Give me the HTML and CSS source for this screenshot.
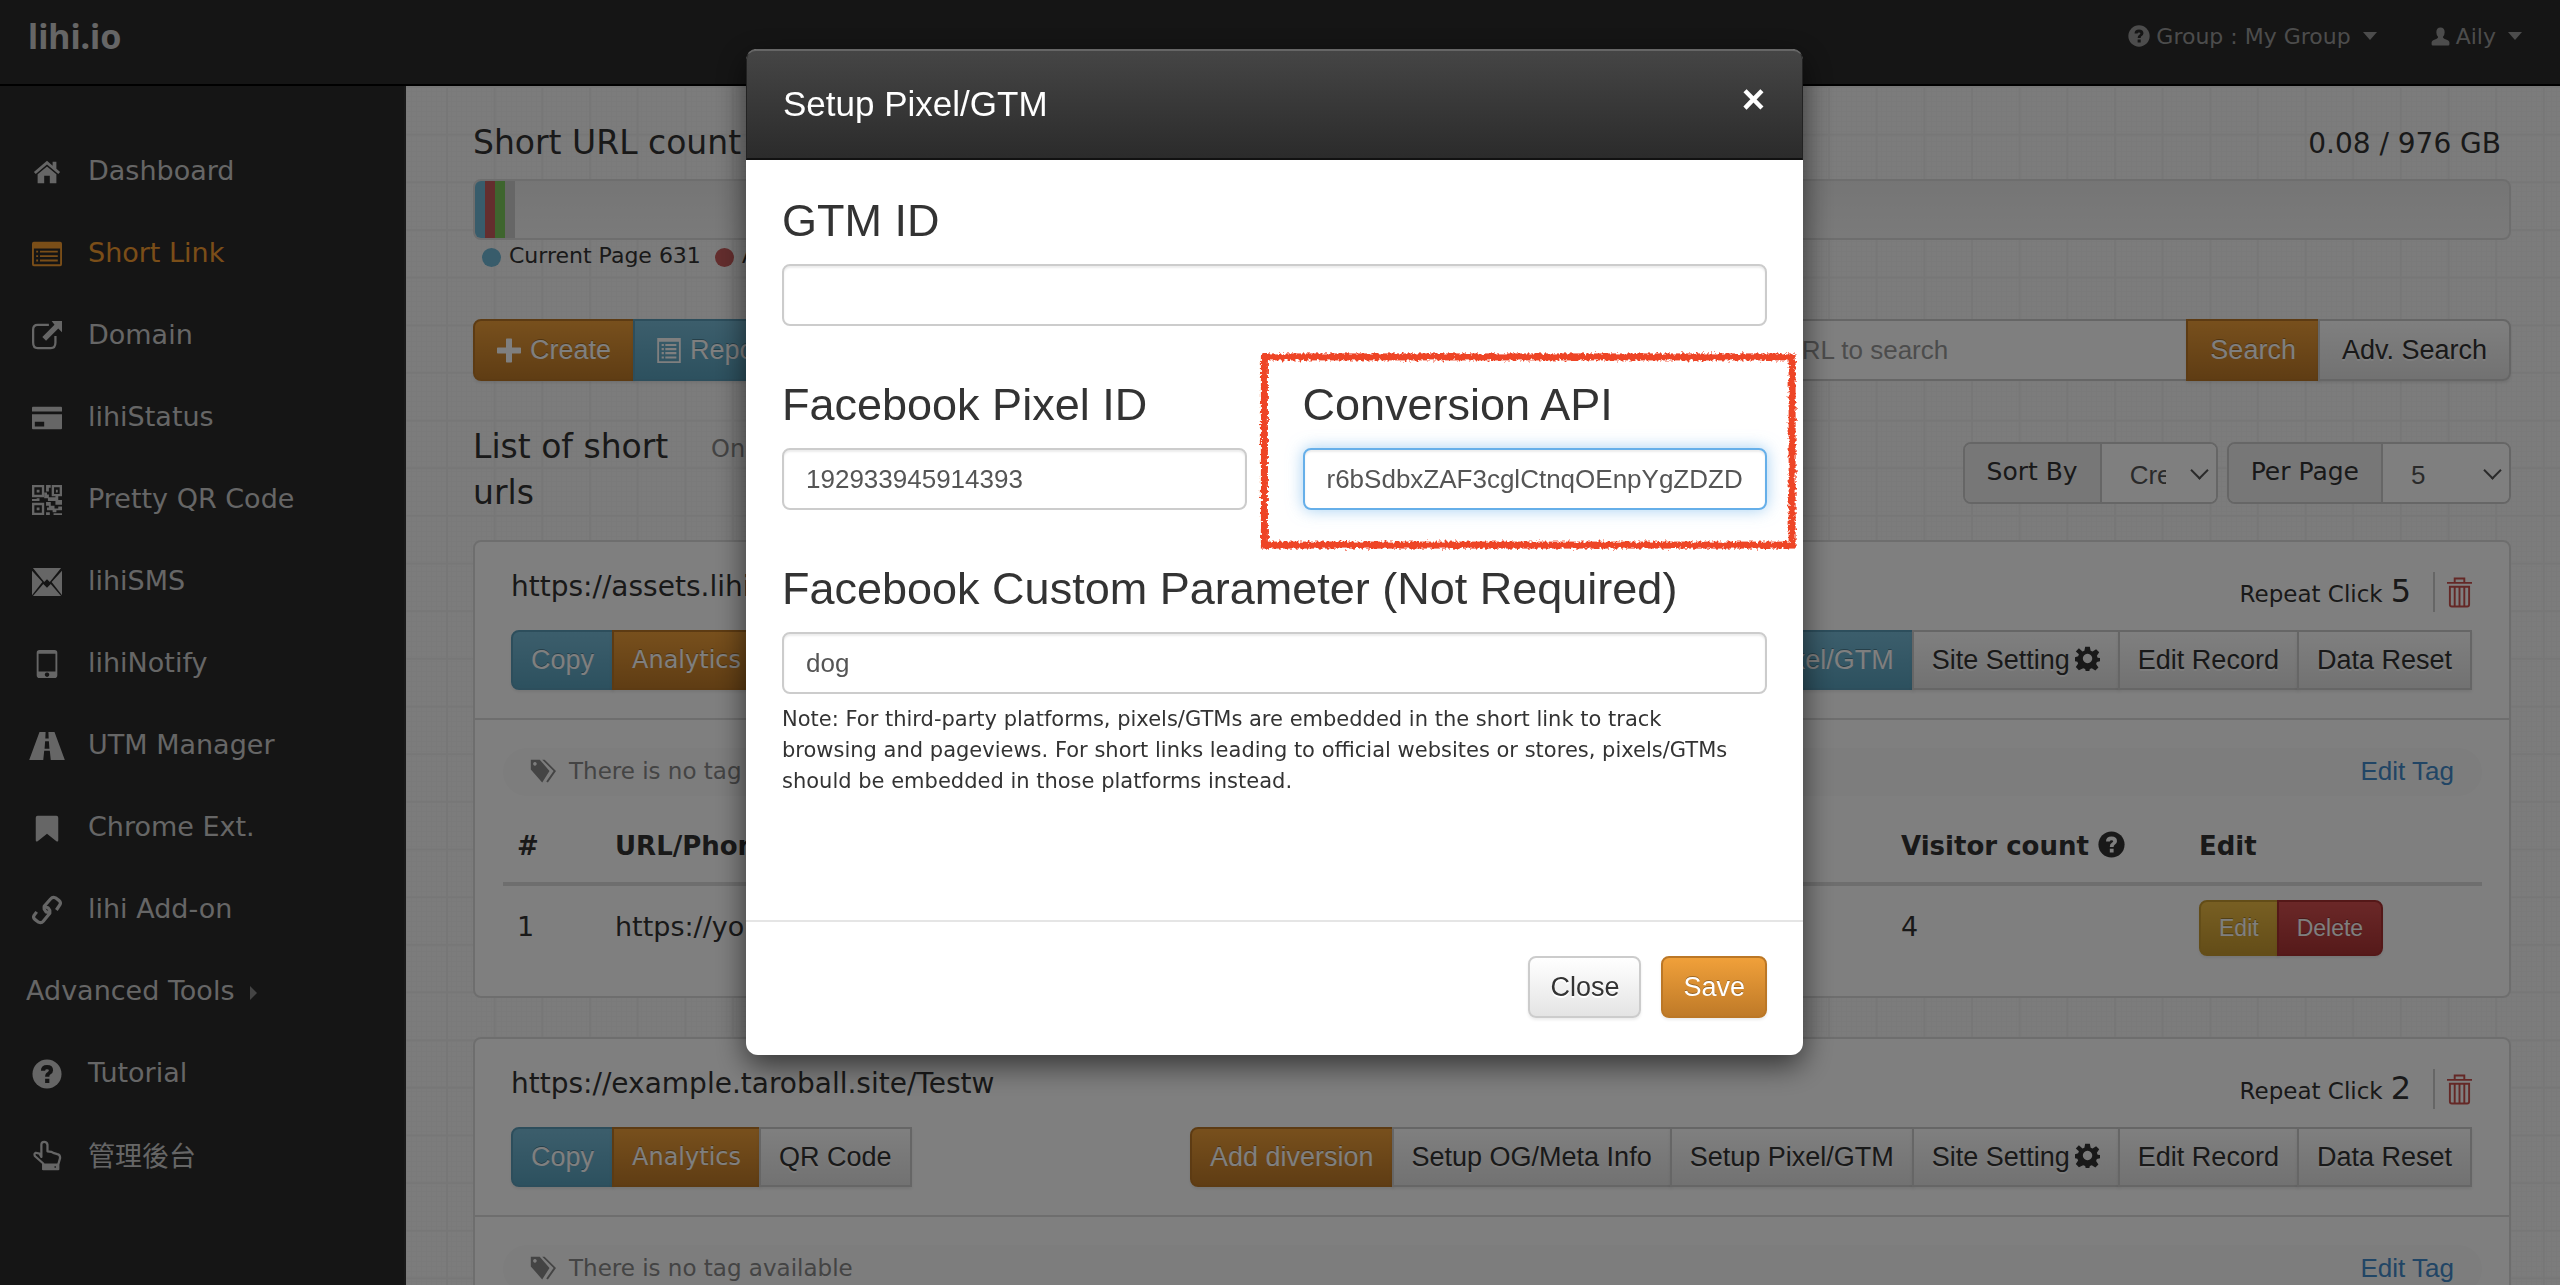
FILE: index.html
```html
<!DOCTYPE html>
<html lang="en">
<head>
    <meta charset="UTF-8">
    <meta name="viewport" content="width=device-width, initial-scale=1.0">
    <title>lihi.io</title>
    <link rel="stylesheet" href="styles.css">
</head>
<body class="modal-open">

    <!-- icons -->
    <svg class="sprite" aria-hidden="true">
        <symbol id="i-home" viewBox="0 0 32 32"><path d="M16 4 2 16l2 2L16 8l12 10 2-2-4-3.400V5h-4v4.200z"/><path d="M16 10 6 18.500V28h7v-8h6v8h7v-9.500z"/></symbol>
        <symbol id="i-list" viewBox="0 0 32 32"><path fill-rule="evenodd" d="M2 3h28q2 0 2 2v22q0 2-2 2H2q-2 0-2-2V5q0-2 2-2zm0 7v17h28V10z"/><path d="M4.500 12.500h2v2h-2zm4 0h19v2h-19zm-4 4.700h2v2h-2zm4 0h19v2h-19zm-4 4.700h2v2h-2zm4 0h19v2h-19z"/></symbol>
        <symbol id="i-out" viewBox="0 0 32 32"><path fill="none" stroke="currentColor" stroke-width="2.400" d="M18 4H6Q1.200 4 1.200 9v14Q1.200 29 6 29h14q5 0 5-6v-7"/><path d="M21 0h11v12l-4-4-13 13-4-4L24 4z"/></symbol>
        <symbol id="i-card" viewBox="0 0 32 32"><path d="M1 4h30q1 0 1 1v4H0V5q0-1 1-1z"/><path fill-rule="evenodd" d="M0 12h32v15q0 1-1 1H1q-1 0-1-1zm3 8v5h10v-5z"/></symbol>
        <symbol id="i-qr" viewBox="0 0 32 32"><path fill-rule="evenodd" d="M0 0h13v13H0zm2.500 2.500v8h8v-8zM21 0h11v12H21zm2.500 2.500v7h6v-7zM0 19h13v13H0zm2.500 2.500v8h8v-8z"/><path d="M5 5h3v3H5zM25.500 5h2v3h-2zM5 24h3v3H5zM15 0h5v3h-2v4h-3zM13 8h3v2h2v3h7v-2h3v5h4v5h-7v-4h-8v-3h-4zM0 15h8v2H0zM5 14h3v3H5zM15 18h5v4h4v3h8v2h-6v2h-4v-2h-6v-3h2v-2h-3zM28 23h4v2h-4zM15 29h4v3h-4zM23 30h9v2h-9z"/></symbol>
        <symbol id="i-mail" viewBox="0 0 32 32"><path d="M1 1h30L19 16l-3-3-3 3zM0 4l11 12L0 30zm32 0L21 16l11 14zM12 18l4 4 4-4 11 13H1z"/></symbol>
        <symbol id="i-phone" viewBox="0 0 32 32"><path fill-rule="evenodd" d="M8 1h16q3 0 3 3v24q0 3-3 3H8q-3 0-3-3V4q0-3 3-3zM7 5v19h18V5zm9 20a2.400 2.400 0 1 0 .1 0z"/></symbol>
        <symbol id="i-road" viewBox="0 0 32 32"><path fill-rule="evenodd" d="M8 1h16l11 30H20l-1-10h-6l-1 10H-3zM14.500 1l-.3 7h3.600l-.3-7zM14 11l-.6 8h5.200L18 11z"/></symbol>
        <symbol id="i-mark" viewBox="0 0 32 32"><path d="M6 3h20q2 0 2 2v24q0 2-2 1L16 22 6 30q-2 1-2-1V5q0-2 2-2z"/></symbol>
        <symbol id="i-link" viewBox="0 0 32 32"><g fill="none" stroke="currentColor" stroke-width="3.400" stroke-linejoin="round"><path d="M19 19l-4-1-2-3 0-3L20 4q2-2.500 5-1l4 3q2 2 1 4l-4 6"/><path d="M12 12l5 1.500 2 3 0 3L12 28q-2 2.500-5 1l-4-3q-2-2-1-4l3-4"/></g></symbol>
        <symbol id="i-help" viewBox="0 0 32 32"><circle cx="16" cy="16" r="15.500"/><path class="hole" d="M9.500 12.500q0-6 6.500-6t6.500 5.500q0 3-3 4.500-1 .5-1 2.500h-4.500q0-4 2.500-5 1.500-1 1.500-2t-2-1-2 1.500zM14 21h4.500v4.500H14z"/></symbol>
        <symbol id="i-hand" viewBox="0 0 32 32"><path fill="none" stroke="currentColor" stroke-width="2.400" stroke-linejoin="round" d="M10 17V4q0-3 3-3t3.500 3v7l4 .5 3 1.500 3.500 1q3 .5 3 4l-2 7v5H12v-6l-9-8q-1-3 1-3.500l4 1z"/><path fill-rule="evenodd" d="M11 24h17v7H11zm13 3v1.500h1.500V27z"/></symbol>
        <symbol id="i-user" viewBox="0 0 32 32"><path d="M16 1q7 0 7 8 0 5-3 8 0 2 3 3 8 2 8 6v3q0 2-2 2H3q-2 0-2-2v-3q0-4 8-6 3-1 3-3-3-3-3-8 0-8 7-8z"/></symbol>
        <symbol id="i-plus" viewBox="0 0 32 32"><path d="M13 0h6q1 0 1 1v11h11q1 0 1 1v6q0 1-1 1H20v11q0 1-1 1h-6q-1 0-1-1V20H1q-1 0-1-1v-6q0-1 1-1h11V1q0-1 1-1z"/></symbol>
        <symbol id="i-page" viewBox="0 0 32 34"><path fill-rule="evenodd" d="M0 0h32v34H0zm2.500 5v26.500h27V5z"/><path d="M6 8h3v3H6zm5 0h15v3H11zM6 13.500h3v3H6zm5 0h15v3H11zM6 19h3v3H6zm5 0h15v3H11zM6 25h3v3H6zm5 0h15v3H11z"/></symbol>
        <symbol id="i-tags" viewBox="0 0 32 32"><path fill-rule="evenodd" d="M1 2h11l12 14-9 14L1 14zm5 3a2.200 2.200 0 1 0 .1 0z"/><path d="M15 2h3l14 14-10 14-2-1 9-13z"/></symbol>
        <symbol id="i-gear" viewBox="0 0 32 32"><path fill-rule="evenodd" d="M13 1h6l1 5 2.500 1L27 4l4 4-3 4.500 1 2.500 3 .5v4l-4 1-1 2.500 3 4.500-4 4-4.500-3-2.500 1-1 4h-4l-1-4-2.500-1L5 31l-4-4 3-4.500L3 20l-3-.5v-5L4 13l1-2.500L1 7l4-4 4.500 4L12 6zm3 9a6 6 0 1 0 .1 0z"/></symbol>
        <symbol id="i-trash" viewBox="0 0 26 32"><path fill="none" stroke="currentColor" stroke-width="2" d="M0 6.500h26M8 6V2h10v4M3 10.500h20V29q0 2-2 2H5q-2 0-2-2zM8 11v19M13 11v19M18 11v19"/></symbol>
    </svg>

    <nav class="navbar">
        <a class="brand" href="#">lihi.io</a>
        <div class="nav-right">
            <a href="#"><svg class="ico-sm"><use href="#i-help"/></svg>Group : My Group<span class="caret"></span></a>
            <a href="#"><svg class="ico-user"><use href="#i-user"/></svg>Aily<span class="caret"></span></a>
        </div>
    </nav>

    <div class="layout">
        <aside class="sidebar">
            <ul>
                <li><a href="#"><svg><use href="#i-home"/></svg>Dashboard</a></li>
                <li><a href="#" class="active"><svg><use href="#i-list"/></svg>Short Link</a></li>
                <li><a href="#"><svg><use href="#i-out"/></svg>Domain</a></li>
                <li><a href="#"><svg><use href="#i-card"/></svg>lihiStatus</a></li>
                <li><a href="#"><svg><use href="#i-qr"/></svg>Pretty QR Code</a></li>
                <li><a href="#"><svg><use href="#i-mail"/></svg>lihiSMS</a></li>
                <li><a href="#"><svg><use href="#i-phone"/></svg>lihiNotify</a></li>
                <li><a href="#"><svg><use href="#i-road"/></svg>UTM Manager</a></li>
                <li><a href="#"><svg><use href="#i-mark"/></svg>Chrome Ext.</a></li>
                <li><a href="#"><svg><use href="#i-link"/></svg>lihi Add-on</a></li>
                <li><a href="#" class="sub">Advanced Tools<span class="caret-right"></span></a></li>
                <li><a href="#"><svg><use href="#i-help"/></svg>Tutorial</a></li>
                <li><a href="#"><svg><use href="#i-hand"/></svg>管理後台</a></li>
            </ul>
        </aside>

        <main class="content">
            <!-- usage -->
            <div class="usage-head">
                <h4>Short URL count</h4>
                <span>0.08 / 976 GB</span>
            </div>
            <div class="progress">
                <div class="bar blue"></div>
                <div class="bar red"></div>
                <div class="bar green"></div>
                <div class="bar gray"></div>
            </div>
            <div class="legend">
                <span><i class="dot blue"></i>Current Page 631</span>
                <span><i class="dot red"></i>All</span>
            </div>

            <!-- toolbar -->
            <div class="toolbar">
                <div class="btn-group">
                    <button class="btn orange"><svg><use href="#i-plus"/></svg>Create</button>
                    <button class="btn info"><svg><use href="#i-page"/></svg>Report</button>
                </div>
                <div class="search">
                    <input type="text" aria-label="Search" placeholder="Keyword or URL to search">
                    <button class="btn orange">Search</button>
                    <button class="btn">Adv. Search</button>
                </div>
            </div>

            <div class="list-head">
                <h4>List of short urls</h4>
                <small>On page</small>
                <div class="filters">
                    <div class="addon">
                        <label for="sort">Sort By</label>
                        <div class="pick sort"><select id="sort"><option>Created</option></select></div>
                    </div>
                    <div class="addon">
                        <label for="per">Per Page</label>
                        <div class="pick per"><select id="per"><option>5</option></select></div>
                    </div>
                </div>
            </div>

            <section class="panel">
                <div class="panel-heading">
                    <div class="line">
                        <span class="url">https://assets.lihi.io/dog</span>
                        <div class="clicks">Repeat Click <b>5</b><button class="trash" aria-label="Delete link"><svg><use href="#i-trash"/></svg></button></div>
                    </div>
                    <div class="line">
                        <div class="btn-group">
                            <button class="btn info">Copy</button>
                            <button class="btn orange alt">Analytics</button>
                            <button class="btn">QR Code</button>
                        </div>
                        <div class="btn-group">
                            <button class="btn orange">Add diversion</button>
                            <button class="btn">Setup OG/Meta Info</button>
                            <button class="btn info">Setup Pixel/GTM</button>
                            <button class="btn">Site Setting<svg class="gear"><use href="#i-gear"/></svg></button>
                            <button class="btn">Edit Record</button>
                            <button class="btn">Data Reset</button>
                        </div>
                    </div>
                </div>
                <div class="panel-body">
                    <div class="tagbar">
                        <svg><use href="#i-tags"/></svg><span>There is no tag available</span>
                        <a href="#">Edit Tag</a>
                    </div>
                    <table>
                        <thead>
                            <tr><th class="c-no">#</th><th>URL/Phone</th><th class="c-count">Visitor count <svg><use href="#i-help"/></svg></th><th class="c-edit">Edit</th></tr>
                        </thead>
                        <tbody>
                            <tr>
                                <td>1</td>
                                <td>https://youtube.com</td>
                                <td>4</td>
                                <td><div class="btn-group small"><button class="btn yellow">Edit</button><button class="btn danger">Delete</button></div></td>
                            </tr>
                        </tbody>
                    </table>
                </div>
            </section>

            <section class="panel">
                <div class="panel-heading">
                    <div class="line">
                        <span class="url">https://example.taroball.site/Testw</span>
                        <div class="clicks">Repeat Click <b>2</b><button class="trash" aria-label="Delete link"><svg><use href="#i-trash"/></svg></button></div>
                    </div>
                    <div class="line">
                        <div class="btn-group">
                            <button class="btn info">Copy</button>
                            <button class="btn orange alt">Analytics</button>
                            <button class="btn">QR Code</button>
                        </div>
                        <div class="btn-group">
                            <button class="btn orange">Add diversion</button>
                            <button class="btn">Setup OG/Meta Info</button>
                            <button class="btn">Setup Pixel/GTM</button>
                            <button class="btn">Site Setting<svg class="gear"><use href="#i-gear"/></svg></button>
                            <button class="btn">Edit Record</button>
                            <button class="btn">Data Reset</button>
                        </div>
                    </div>
                </div>
                <div class="panel-body">
                    <div class="tagbar">
                        <svg><use href="#i-tags"/></svg><span>There is no tag available</span>
                        <a href="#">Edit Tag</a>
                    </div>
                </div>
            </section>
        </main>
    </div>

    <!-- pixel / gtm modal -->
    <div class="modal">
        <div class="modal-dialog" role="dialog" aria-labelledby="modalTitle">
            <div class="modal-header">
                <h4 id="modalTitle">Setup Pixel/GTM</h4>
                <button class="close" aria-label="Close">×</button>
            </div>
            <div class="modal-body">
                <div class="field">
                    <label for="gtm">GTM ID</label>
                    <input type="text" id="gtm">
                </div>
                <div class="row">
                    <div class="field">
                        <label for="pixel">Facebook Pixel ID</label>
                        <input type="text" id="pixel" value="192933945914393">
                    </div>
                    <div class="field marked">
                        <label for="capi">Conversion API</label>
                        <input type="text" id="capi" class="focused" value="r6bSdbxZAF3cglCtnqOEnpYgZDZD">
                        <svg class="marker" aria-hidden="true">
                            <filter id="rough" x="-5%" y="-5%" width="110%" height="110%">
                                <feTurbulence type="fractalNoise" baseFrequency="0.35" numOctaves="2" seed="4"/>
                                <feDisplacementMap in="SourceGraphic" scale="6"/>
                            </filter>
                            <rect x="1%" y="2%" width="98%" height="96%" filter="url(#rough)"/>
                        </svg>
                    </div>
                </div>
                <div class="field">
                    <label for="param">Facebook Custom Parameter (Not Required)</label>
                    <input type="text" id="param" value="dog">
                </div>
                <p class="note">Note: For third-party platforms, pixels/GTMs are embedded in the short link to track browsing and pageviews. For short links leading to official websites or stores, pixels/GTMs should be embedded in those platforms instead.</p>
            </div>
            <div class="modal-footer">
                <button class="btn">Close</button>
                <button class="btn orange">Save</button>
            </div>
        </div>
    </div>

</body>
</html>
```
FILE: styles.css
```css
* {
    box-sizing: border-box;
}

body {
    margin: 0;
    --hole: #2a2a2a;
    font-family: "DejaVu Sans", Verdana, "Noto Sans CJK TC", sans-serif;
    font-size: 27px;
    color: #333;
    background: #f8f8f8;
}

.modal-open {
    height: 100vh;
    overflow: hidden;
}

a {
    text-decoration: none;
}

h4 {
    margin: 0;
    font-weight: normal;
}

svg {
    fill: currentColor;
    flex: none;
}

.sprite {
    display: none;
}

.hole {
    fill: var(--hole);
}

symbol {
    overflow: visible;
}

/* navbar */
.navbar {
    height: 86px;
    padding: 0 38px 12px 28px;
    display: flex;
    justify-content: space-between;
    align-items: center;
    background: #2a2a2a;
    border-bottom: 2px solid #000;
}

.brand {
    font-family: "Noto Sans", sans-serif;
    font-size: 34px;
    font-weight: bold;
    color: #ccc;
}

.nav-right {
    display: flex;
    gap: 54px;
    font-size: 22px;
}

.nav-right a {
    display: flex;
    align-items: center;
    color: #999;
}

.ico-sm {
    width: 22px;
    height: 22px;
    margin-right: 6px;
}

.ico-user {
    width: 19px;
    height: 19px;
    margin-right: 6px;
}

.caret {
    margin-left: 12px;
    border-top: 8px solid;
    border-left: 7px solid transparent;
    border-right: 7px solid transparent;
}

.layout {
    display: flex;
    height: calc(100vh - 86px);
    overflow: hidden;
}

/* sidebar */
.sidebar {
    flex: none;
    width: 406px;
    background: #2a2a2a;
    border-right: 2px solid #333;
}

.sidebar ul {
    list-style: none;
    margin: 0;
    padding: 43px 0 0 26px;
}

.sidebar a {
    height: 82px;
    padding-left: 6px;
    display: flex;
    align-items: center;
    color: #ccc;
}

.sidebar svg {
    width: 30px;
    height: 30px;
    margin: 4px 26px 0 0;
    overflow: visible;
}

.sidebar .active {
    color: #f59c30;
}

.sidebar .sub {
    padding-left: 0;
}

.caret-right {
    margin: 6px 0 0 16px;
    border-left: 7px solid #888;
    border-top: 7px solid transparent;
    border-bottom: 7px solid transparent;
}

/* content */
.content {
    flex: 1;
    min-width: 0;
    padding: 34px 49px 0 67px;
    background-color: #f8f8f8;
    background-image:
        linear-gradient(#efefef 2px, transparent 2px),
        linear-gradient(90deg, #efefef 2px, transparent 2px),
        linear-gradient(#f4f4f4 1px, transparent 1px),
        linear-gradient(90deg, #f4f4f4 1px, transparent 1px);
    background-size: calc(143px / 3) calc(143px / 3), calc(143px / 3) calc(143px / 3), 5px 5px, 5px 5px;
    background-position: 40px 0;
}

.usage-head {
    display: flex;
    justify-content: space-between;
    align-items: center;
    height: 46px;
    margin-bottom: 13px;
    padding-right: 10px;
    font-size: 28px;
}

.usage-head h4,
.list-head h4 {
    font-size: 33px;
    line-height: 46px;
}

.progress {
    height: 61px;
    display: flex;
    border: 2px solid #ddd;
    border-radius: 8px;
    overflow: hidden;
    background: linear-gradient(#ebebeb, #f5f5f5);
}

.bar {
    width: 10px;
}

.blue { background: #70b8d6; }
.red { background: #c85c5c; }
.green { background: #7ccb5c; }
.gray { background: #ccc; }

.legend {
    display: flex;
    gap: 14px;
    height: 30px;
    padding-left: 9px;
    font-size: 22px;
}

.legend span {
    display: flex;
    align-items: center;
}

.dot {
    width: 19px;
    height: 19px;
    margin: 4px 8px 0 0;
    border-radius: 50%;
}

/* buttons */
.btn {
    height: 60px;
    padding: 0 18px;
    border: 2px solid #ccc;
    border-radius: 0;
    font-family: "Liberation Sans", Arial, sans-serif;
    font-size: 27px;
    color: #333;
    text-shadow: 0 2px 0 #fff;
    background: linear-gradient(#fff, #e4e4e4);
    box-shadow: 0 2px 3px rgba(0, 0, 0, .08);
    display: flex;
    align-items: center;
    white-space: nowrap;
}

.btn + .btn {
    margin-left: -2px;
}

.orange {
    color: #fff;
    text-shadow: 0 -1px 0 rgba(0, 0, 0, .3);
    border-color: #bb7726;
    background: linear-gradient(#f0a03a, #bf7a28);
}

.info {
    color: #fff;
    text-shadow: 0 -1px 0 rgba(0, 0, 0, .3);
    border-color: #5a9cb8;
    background: linear-gradient(#78bcd8, #5aa2be);
}

.yellow {
    color: #fff;
    text-shadow: 0 -1px 0 rgba(0, 0, 0, .3);
    border-color: #c79a30;
    background: linear-gradient(#f0be46, #c79a30);
}

.danger {
    color: #fff;
    text-shadow: 0 -1px 0 rgba(0, 0, 0, .3);
    border-color: #a83030;
    background: linear-gradient(#d65050, #ac3434);
}

.alt {
    font-family: "DejaVu Sans", sans-serif;
    font-size: 24px;
}

.btn-group {
    display: flex;
}

.btn-group .btn:first-child {
    border-radius: 8px 0 0 8px;
}

.toolbar {
    display: flex;
    justify-content: space-between;
    margin-top: 49px;
}

.toolbar .btn {
    height: 62px;
    padding: 0 22px;
}

.toolbar svg {
    width: 24px;
    height: 25px;
    margin-right: 9px;
}

.search {
    width: 44%;
    display: flex;
}

.search input {
    flex: 1;
    min-width: 0;
    padding: 0 28px;
    border: 2px solid #ccc;
    border-right: 0;
    font-family: "Liberation Sans", Arial, sans-serif;
    font-size: 26px;
    background: #fff;
}

.search input::placeholder {
    color: #999;
}

.search .btn:last-child {
    border-radius: 0 8px 8px 0;
}

.list-head {
    display: flex;
    margin: 43px 0 24px;
    height: 92px;
}

.list-head h4 {
    width: 238px;
    padding-right: 30px;
}

.list-head small {
    font-size: 24px;
    line-height: 50px;
    color: #888;
}

.filters {
    display: flex;
    gap: 9px;
    margin: 18px 0 0 auto;
}

.addon {
    display: flex;
    height: 62px;
    border: 2px solid #ccc;
    border-radius: 8px;
    overflow: hidden;
    background: #fff;
}

.addon label {
    padding: 0 22px;
    line-height: 56px;
    background: #eee;
    border-right: 2px solid #ccc;
    font-size: 25px;
}

.pick {
    position: relative;
}

/* chevron drawn over the select */
.pick::after {
    content: "";
    position: absolute;
    right: 10px;
    top: 20px;
    width: 11px;
    height: 11px;
    border: solid #555;
    border-width: 0 2px 2px 0;
    transform: rotate(45deg);
    pointer-events: none;
}

.pick select {
    appearance: none;
    width: 100%;
    height: 58px;
    padding: 4px 0 0 28px;
    border: 0;
    background: #fff;
    font-family: "Liberation Sans", Arial, sans-serif;
    font-size: 26px;
    color: #555;
}

.sort {
    width: 114px;
}

.sort select {
    border-right: 50px solid #fff;
}

.per {
    width: 126px;
}

/* panels */
.panel {
    margin-bottom: 39px;
    border: 2px solid #ddd;
    border-radius: 8px;
    background: #fff;
}

.panel-heading {
    padding: 24px 37px 28px 36px;
    border-bottom: 2px solid #ddd;
}

.line {
    display: flex;
    justify-content: space-between;
    align-items: center;
}

.line:first-child {
    height: 44px;
    margin-bottom: 20px;
}

.url {
    font-size: 28px;
    padding-bottom: 4px;
}

.clicks {
    display: flex;
    align-items: baseline;
    gap: 8px;
    padding-top: 8px;
    font-size: 23px;
}

.clicks b {
    font-size: 32px;
    font-weight: normal;
}

.trash {
    align-self: center;
    margin-left: 14px;
    padding: 4px 0 4px 12px;
    border: 0;
    border-left: 2px solid #ccc;
    background: none;
    color: #c9504c;
}

.trash svg {
    display: block;
    width: 25px;
    height: 32px;
}

.gear {
    width: 25px;
    height: 25px;
    margin: -4px 0 0 5px;
}

.panel-body {
    padding: 28px 27px 40px 28px;
}

.tagbar {
    display: flex;
    align-items: center;
    height: 48px;
    padding: 0 28px 2px 26px;
    border-radius: 24px;
    background: #fafafa;
    color: #888;
    font-size: 23px;
}

.tagbar svg {
    width: 28px;
    height: 26px;
    margin-right: 12px;
}

.tagbar a {
    margin-left: auto;
    font-family: "Liberation Sans", Arial, sans-serif;
    font-size: 26px;
    color: #428bca;
}

table {
    width: 100%;
    margin-top: 10px;
    border-collapse: collapse;
    table-layout: fixed;
}

th {
    --hole: #fff;
    height: 78px;
    padding: 4px 14px 0;
    font-size: 26px;
    text-align: left;
    border-bottom: 4px solid #ddd;
}

th svg {
    width: 27px;
    height: 27px;
    vertical-align: -3px;
}

td {
    padding: 14px 14px 0;
    vertical-align: top;
    line-height: 54px;
}

.c-no {
    width: 98px;
}

.c-count {
    width: 298px;
}

.c-edit {
    width: 297px;
}

.small .btn {
    height: 56px;
    font-size: 23px;
}

.small .btn:last-child {
    border-radius: 0 8px 8px 0;
}

/* modal */
.modal {
    position: fixed;
    inset: 0;
    padding: 49px 11px 0 0;
    background: rgba(0, 0, 0, .5);
}

.modal-dialog {
    max-width: 1057px;
    margin: 0 auto;
    border-radius: 12px;
    background: #fff;
    box-shadow: 0 10px 30px rgba(0, 0, 0, .6);
    font-family: "Liberation Sans", Arial, sans-serif;
}

.modal-header {
    height: 111px;
    padding: 0 37px 2px 36px;
    display: flex;
    justify-content: space-between;
    align-items: center;
    border-radius: 10px 10px 0 0;
    border: 1px solid #222;
    border-top: 2px solid #666;
    border-bottom: 2px solid #111;
    background: linear-gradient(#454545, #2b2b2b);
    color: #fff;
}

.modal-header h4 {
    font-size: 35px;
}

.close {
    padding: 0 0 10px;
    border: 0;
    background: none;
    color: #fff;
    font-family: "Liberation Sans", Arial, sans-serif;
    font-size: 40px;
    font-weight: bold;
    line-height: 40px;
}

.modal-body {
    padding: 32px 36px 123px;
    border-bottom: 2px solid #e5e5e5;
}

.field {
    flex: 1;
    min-width: 0;
    margin-bottom: 50px;
}

.field label {
    display: block;
    height: 72px;
    line-height: 58px;
    font-size: 45px;
}

.field input {
    display: block;
    width: 100%;
    height: 62px;
    padding: 0 22px;
    border: 2px solid #ccc;
    border-radius: 8px;
    font-family: "Liberation Sans", Arial, sans-serif;
    font-size: 26px;
    color: #555;
    background: #fff;
    box-shadow: inset 0 2px 2px rgba(0, 0, 0, .08);
}

.field .focused {
    border-color: #66afe9;
    box-shadow: inset 0 2px 2px rgba(0, 0, 0, .08), 0 0 16px rgba(102, 175, 233, .6);
}

.row {
    display: flex;
    gap: 56px;
}

.marked {
    position: relative;
}

/* hand drawn frame round the field */
.marker {
    position: absolute;
    top: -23px;
    left: -44px;
    width: calc(100% + 74px);
    height: 196px;
    overflow: visible;
    pointer-events: none;
}

.marker rect {
    fill: none;
    stroke: #ee4427;
    stroke-width: 7px;
}

.note {
    margin: -40px 0 0;
    padding-right: 16px;
    font-family: "DejaVu Sans", Verdana, sans-serif;
    font-size: 21px;
    line-height: 31px;
}

.modal-footer {
    display: flex;
    justify-content: flex-end;
    gap: 20px;
    padding: 34px 36px 37px;
}

.modal-footer .btn {
    height: 62px;
    margin: 0;
    padding: 0 20px;
    border-radius: 8px;
}
```
